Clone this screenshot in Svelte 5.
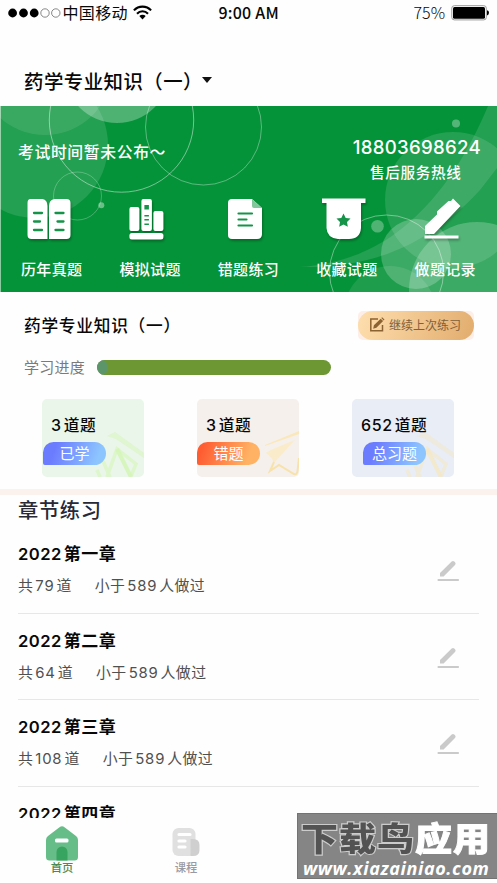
<script>
  const chapters = [
    { name: '第一章', total: '79', people: '589' },
    { name: '第二章', total: '64', people: '589' },
    { name: '第三章', total: '108', people: '589' },
    { name: '第四章', total: '', people: '' }
  ];
  const stats = [
    { count: '3', label: '已学', tone: 'green' },
    { count: '3', label: '错题', tone: 'orange' },
    { count: '652', label: '总习题', tone: 'blue' }
  ];
  const menu = [
    { label: '历年真题', icon: 'book' },
    { label: '模拟试题', icon: 'shelf' },
    { label: '错题练习', icon: 'doc' },
    { label: '收藏试题', icon: 'badge' },
    { label: '做题记录', icon: 'pen' }
  ];
</script>

<div class="phone">
  <header class="status">
    <div class="carrier">
      <svg class="signal" width="53" height="12" viewBox="0 0 53 12">
        <circle cx="4.6" cy="6" r="4.4" /><circle cx="15.5" cy="6" r="4.4" /><circle cx="26.2" cy="6" r="4.4" />
        <g fill="none" stroke="#555" stroke-width=".7"><circle cx="37" cy="6" r="4.2" /><circle cx="47.8" cy="6" r="4.2" /></g>
      </svg>
      <span class="operator">中国移动</span>
      <svg class="wifi" width="19" height="15" viewBox="0 0 19 15">
        <g fill="none" stroke="#000" stroke-width="2.1"><path d="M.9 5.4C5.6.3 13.4.3 18.100 5.400" /><path d="M4 8.700c3-3.200 8-3.200 11 0" /></g>
        <path d="M6.300 11.100c1.900-1.700 4.500-1.700 6.400 0L9.500 14.500z" />
      </svg>
    </div>
    <span class="time">9:00 AM</span>
    <div class="power">
      <span>75%</span>
      <svg width="38" height="16" viewBox="0 0 38 16">
        <rect x=".8" y=".7" width="34.500" height="14.200" rx="2.500" fill="#fff" stroke="#999" stroke-width="1" />
        <rect x="2" y="2" width="32" height="11.700" rx="1.500" /><path d="M36 5.200q2 .4 2 2.600t-2 2.600z" />
      </svg>
    </div>
  </header>

  <div class="subject"><span>药学专业知识（一）</span><i class="caret"></i></div>

  <section class="banner">
    <svg class="art" width="497" height="186" viewBox="0 106 497 186">
      <g fill="#fff">
        <circle cx="35" cy="145" r="73" fill-opacity=".12" />
        <circle cx="45" cy="68" r="67" fill-opacity=".1" />
        <circle cx="117" cy="70" r="53" fill-opacity=".29" />
        <circle cx="453" cy="200" r="68" fill-opacity=".12" />
        <path d="M488 106C466 158 437 203 396 233C365 256 330 265 300 267C354 268 418 257 480 190L497 168V106z" fill-opacity=".12" />
        <circle cx="416" cy="254" r="35" fill-opacity=".22" />
        <circle cx="477" cy="290" r="68" fill-opacity=".22" />
        <circle cx="390" cy="312" r="46" fill-opacity=".1" />
        <circle cx="456" cy="123.500" r="4" fill-opacity=".32" />
        <circle cx="377.500" cy="226.300" r="6.300" fill-opacity=".3" />
        <circle cx="101.300" cy="205.300" r="3" fill-opacity=".4" />
      </g>
      <g fill="none" stroke="#fff" stroke-opacity=".45">
        <circle cx="121.500" cy="120" r="72.200" /><circle cx="203.500" cy="127" r="58" stroke-opacity=".35" />
        <circle cx="77.500" cy="196" r="24" stroke-opacity=".25" /><circle cx="386.500" cy="272" r="57" stroke-opacity=".4" />
      </g>
    </svg>
    <div class="notice">
      <p class="exam">考试时间暂未公布～</p>
      <div class="hotline"><b>18803698624</b><span>售后服务热线</span></div>
    </div>
    <nav class="menu">
      {#each menu as item}
        <div class="entry">
          <svg width="50" height="46" viewBox="0 0 50 46">
            {#if item.icon === 'book'}
              <g transform="translate(-2.500 0)"><path d="M6 2H18q5 1 5 7V42H7q-4 0-4-4V6q0-4 3-4zM30 2H42q4 0 4 4V38q0 4-4 4H24.500V9q0-6 5.500-7z" fill="#fff" />
              <path d="M9.500 16h8M9.500 24.500h6M9.500 33h8M31 16h8M33 24.500h6M31 33h8" stroke="#159348" stroke-width="2.300" stroke-linecap="round" /></g>
            {:else if item.icon === 'shelf'}
              <g transform="translate(-.6 0)"><g fill="#fff"><rect x="5" y="10" width="10" height="24" rx="2" /><rect x="17" y="2" width="10.500" height="32" rx="2" /><rect x="29" y="14" width="10" height="20" rx="2" /><rect x="5" y="36" width="34" height="6.500" rx="2.500" /></g>
              <path d="M20 8h4.500v4.500H20zM20 18h4.500v1.500H20zM20 22h4.500v1.500H20zM20 26.500h4.500v1.500H20z" fill="#159348" /></g>
            {:else if item.icon === 'doc'}
              <path d="M9 2H29L39 11V37q0 5-5 5H9q-4 0-4-4V6q0-4 4-4z" fill="#fff" /><path d="M29 2V9q0 2 2 2h8z" fill="#82c79b" />
              <path d="M15.500 16.500H29M15.500 22.500h8M15.500 28.500H29" stroke="#159348" stroke-width="2.200" stroke-linecap="round" />
            {:else if item.icon === 'badge'}
              <path d="M0 1.500H43.500V6H39V31Q38 42 27 42H16Q5 41 4.500 31V6H0z" fill="#fff" />
              <path d="m21.500 16.500 2.200 4.400 4.800.7-3.500 3.400.8 4.800-4.300-2.300-4.300 2.300.8-4.800-3.500-3.400 4.800-.7z" fill="#159348" />
            {:else}
              <path d="M5 37V29L17 17.500V14.500L28.500 4H31L33 1.500L40.500 9L14 37zM4.500 38.500H38.500V41.500H4.500z" fill="#fff" />
            {/if}
          </svg>
          <span>{item.label}</span>
        </div>
      {/each}
    </nav>
  </section>

  <section class="progress">
    <div class="heading">
      <h2>药学专业知识（一）</h2>
      <div class="resume-box"><button class="resume">
        <svg width="16" height="16" viewBox="0 0 16 16"><path d="M9 2H1.800V13.800H13.500V8" fill="none" stroke="#8b6231" stroke-width="1.500" /><path d="m4.200 11.700.7-3.500L11.700 1.700l2.400 2.300-6.700 6.700zM12.300 1.100l.8-.8 2.400 2.300-.8.800z" fill="#8b6231" /></svg>
        <span>继续上次练习</span>
      </button></div>
    </div>
    <div class="meter-row"><span>学习进度</span><div class="meter"><i></i></div></div>
    <div class="stats">
      {#each stats as stat}
        <div class="card {stat.tone}">
          {#if stat.tone === 'orange'}
            <svg class="deco" width="35" height="46" viewBox="0 0 35 46" fill="none">
              <path d="M1 14 35 0V3Q18 9 1 15z" fill="#fae8bb" /><path d="M2 22Q3 20 31 9L10 32Q8 26 2 22z" fill="#faecca" /><path d="M10 31 6 40 15 34 30 43Q33 44 33.500 40L35 27" stroke="#f8e2ab" stroke-width="2" />
            </svg>
          {:else}
            <svg class="deco" width="50" height="46" viewBox="0 0 50 46" fill="none">
              <path d="M13 5 21 1 50 22V27L22 8z" fill="currentColor" opacity=".5" /><path d="M3 39 6 46M9 30 16 46M13 46 23 18 42 33 37 45" stroke="currentColor" stroke-width="3.500" opacity=".6" /><path d="m23 18 14 28" stroke="currentColor" stroke-width="4" opacity=".85" />
            </svg>
          {/if}
          <p><b>{stat.count}</b>道题</p>
          <span class="tag">{stat.label}</span>
        </div>
      {/each}
    </div>
  </section>

  <section class="chapters">
    <h1>章节练习</h1>
    {#each chapters as chapter}
      <article>
        <div>
          <h3><b>2022</b>{chapter.name}</h3>
          {#if chapter.total}
            <p><span>共<b>{chapter.total}</b>道</span><span>小于<b>{chapter.people}</b>人做过</span></p>
          {/if}
        </div>
        <svg width="22" height="22" viewBox="0 0 22 22"><path d="M3 16.500V13L14.700 1.600Q16 .5 17.300 1.600L18.200 2.500Q19.200 3.700 18 4.900L6.600 16.500z" fill="#cacaca" /><rect x=".5" y="19" width="21.500" height="2" rx=".8" fill="#cacaca" /></svg>
      </article>
    {/each}
  </section>

  <nav class="tabs">
    <div class="tab active">
      <svg width="32" height="35" viewBox="0 0 32 35"><path d="M13.500 1.200Q16-.5 18.500 1.200L30 10q2 1.500 2 4V31q0 3.500-3.500 3.500H3.500Q0 34.500 0 31V14q0-2.500 2-4z" fill="#67bd88" /><rect x="9" y="12.500" width="13.500" height="4" rx="1.500" fill="#fff" /><path d="M10.500 34.500V26a5.500 5.500 0 0 1 11 0v8.500z" fill="#37a45f" /></svg>
      <span>首页</span>
    </div>
    <div class="tab">
      <svg width="32" height="35" viewBox="0 0 32 35"><rect x="2.500" y="2" width="23" height="28" rx="6" fill="#e0e0e0" /><path d="M20.500 13H23q6.500 0 6.500 6v5q0 6-6.500 6h-2.500z" fill="#cfcfcf" /><path d="M9 8.500H20M9 15H15M9 21H15" stroke="#fff" stroke-width="3.200" stroke-linecap="round" /></svg>
      <span>课程</span>
    </div>
  </nav>

  <div class="watermark">
    <div class="brand"><span>下载鸟</span><em>应用</em></div>
    <div class="site">www.xiazainiao.com</div>
  </div>
</div>

<style>
  :global(body) { margin: 0; background: #fff; }
  .phone { position: relative; display: flex; flex-direction: column; width: 497px; height: 883px; overflow: hidden; background: #fefefe; color: #080808; font-family: Inter, "Noto Sans CJK SC", sans-serif; }
  h1, h2, h3, p { margin: 0; }
  span, p, h1, h2, h3 { white-space: nowrap; }

  .status { display: grid; grid-template-columns: 1fr 60px 1fr; height: 25px; align-items: center; font: 16px/25px "Noto Sans CJK SC", sans-serif; }
  .carrier { display: flex; align-items: center; padding-left: 8px; }
  .operator { margin: 0 5px 0 1.500px; letter-spacing: .35px; }
  .wifi { margin-top: -1px; }
  .time { font-weight: 500; letter-spacing: .2px; }
  .power { display: flex; align-items: center; justify-content: flex-end; gap: 6px; padding-right: 8px; font-weight: 300; }

  .subject { display: flex; align-items: center; height: 81px; box-sizing: border-box; padding: 29px 0 0 24px; font-family: "Noto Sans CJK SC", sans-serif; font-size: 19.400px; font-weight: 500; letter-spacing: .5px; }
  .caret { width: 0; height: 0; margin-left: -1px; border: 5.500px solid transparent; border-top: 6px solid #111; border-bottom: 0; }

  .banner { position: relative; height: 186px; flex: none; background: #059339; color: #fff; overflow: hidden; box-shadow: inset 1px 0 #8acb9f; }
  .art { position: absolute; inset: 0; }
  .notice { position: relative; display: flex; justify-content: space-between; height: 91px; box-sizing: border-box; padding: 0 16px 0 18px; }
  .exam { padding-top: 35px; line-height: 24px; font-size: 15.800px; font-weight: 500; letter-spacing: .65px; }
  .hotline { display: flex; flex-direction: column; align-items: center; padding-top: 29px; }
  .hotline b { font-size: 18.600px; line-height: 24px; font-weight: 500; letter-spacing: .3px; }
  .hotline span { margin: 2px 2px 0 0; font-size: 14.600px; line-height: 24px; font-weight: 500; letter-spacing: .65px; }
  .menu { position: relative; display: grid; grid-template-columns: repeat(5, 98.400px); padding-left: 2.500px; }
  .entry { display: flex; flex-direction: column; align-items: center; }
  .entry svg { filter: drop-shadow(1px 2px 1px #0004); }
  .entry span { margin-top: 14.500px; font-size: 15px; line-height: 24px; font-weight: 500; letter-spacing: .35px; }

  .progress { height: 203px; flex: none; box-sizing: border-box; padding-top: 18px; border-bottom: 6px solid #fbf2ee; }
  .heading { display: flex; justify-content: space-between; align-items: center; height: 30px; padding: 0 23px 0 24px; }
  h2 { font-family: "Noto Sans CJK SC", sans-serif; font-size: 16.700px; font-weight: 500; letter-spacing: .75px; }
  .resume-box { background: #fdeee8; border-radius: 5px; display: flex; }
  .resume { display: flex; align-items: center; gap: 4px; width: 116px; height: 29px; padding: 0 0 0 11px; border: 0; border-radius: 15px; color: #80603a; background: linear-gradient(110deg, #ffdfaf, #e2ac6d); font: 12px/20px "Noto Sans CJK SC", sans-serif; }
  .meter-row { display: flex; align-items: center; gap: 12px; height: 24px; margin-top: 15px; padding-left: 24px; color: #7b7b7b; font-size: 15px; letter-spacing: .25px; }
  .meter-row span { margin-top: -2px; }
  .meter { width: 234px; height: 15px; border-radius: 8px; overflow: hidden; background: #6d9733; }
  .meter i { display: block; width: 10px; height: 15px; border-radius: 8px; background: #5d956a; }
  .stats { display: flex; gap: 53px; margin: 20px 0 0 42px; }
  .card { position: relative; width: 102px; height: 78px; border-radius: 5px; overflow: hidden; box-sizing: border-box; padding-top: 14px; }
  .green { background: #eaf6ea; color: #d4f6b5; }
  .orange { background: #f5f0eb; }
  .blue { background: #e8edf6; color: #f5e7c5; }
  .deco { position: absolute; right: 0; bottom: 0; }
  .card p { position: relative; padding-left: 9px; color: #080808; font-size: 15.700px; line-height: 25px; font-weight: 500; letter-spacing: .6px; }
  .card b { margin-right: 2px; font-weight: 500; font-size: 16px; }
  .tag { position: relative; display: block; width: 63px; height: 23px; margin-top: 4px; border-radius: 11px 12px 12px 2px; background: linear-gradient(110deg, #6c7cff 20%, #8dc5ff 85%); color: #fff; font-size: 15px; line-height: 23px; text-align: center; }
  .green .tag { margin-left: 1px; }
  .orange .tag { background: linear-gradient(110deg, #ff5c32 10%, #ffb264 80%); }
  .blue .tag { margin-left: 11px; }

  .chapters { flex: 1; min-height: 0; overflow: hidden; padding: 0 18px; }
  h1 { height: 32px; font-size: 20.300px; line-height: 32px; font-weight: 500; letter-spacing: .6px; color: #292936; }
  article { display: flex; justify-content: space-between; height: 86.600px; box-sizing: border-box; border-bottom: 1.500px solid #e7e7e7; padding: 15px 20px 0 0; }
  h3 { font-size: 17px; line-height: 25px; font-weight: 600; letter-spacing: .45px; }
  h3 b { margin-right: 2px; font-weight: 600; font-size: 16.600px; }
  article p { display: flex; gap: 23px; margin-top: 6px; font-size: 14.900px; line-height: 26px; letter-spacing: .4px; color: #505050; }
  article p b { margin: 0 2px; font-weight: 400; letter-spacing: .8px; }
  article svg { margin-top: 18px; }

  .tabs { display: grid; grid-template-columns: repeat(4, 124px); height: 65px; flex: none; background: #fefefe; }
  .tab { display: flex; flex-direction: column; align-items: center; padding-top: 8px; color: #9999a2; font-size: 11.300px; line-height: 15px; font-weight: 500; }
  .active { color: #4c8952; }

  .watermark { position: absolute; left: 297px; top: 813px; width: 200px; height: 66px; box-sizing: border-box; border: 1px solid #737373; border-right: 0; background: #858585; }
  .brand { display: flex; height: 46px; padding-left: 3px; font-size: 37px; line-height: 51px; font-weight: 900; letter-spacing: 1px; transform: scaleY(.88); }
  .brand span { color: #535353; -webkit-text-stroke: 2.500px #ccc; paint-order: stroke fill; }
  .brand em { color: #fff; font-style: normal; -webkit-text-stroke: 1px #fff; }
  .site { margin-left: 5px; color: #fff; font: italic 700 18px/17px "Open Sans", sans-serif; letter-spacing: .6px; }
</style>
